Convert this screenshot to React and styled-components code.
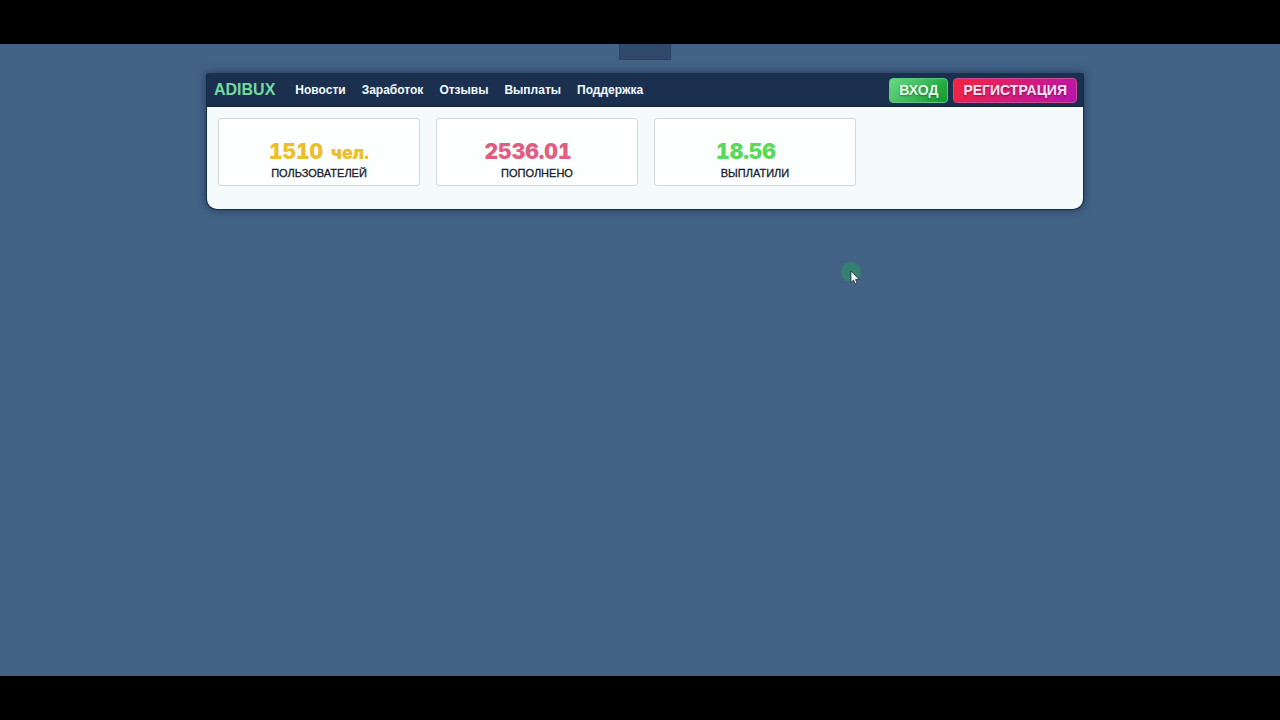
import React from "react";
import styled, { createGlobalStyle } from "styled-components";

const GlobalStyle = createGlobalStyle`
  *, *::before, *::after { box-sizing: border-box; }
  body {
    margin: 0;
    background: #000;
    font-family: "Liberation Sans", Arial, sans-serif;
  }
`;

const Screen = styled.div`
  position: relative;
  min-height: 100vh;
  padding: 44px 0;
  display: flex;
  background: #000;
`;

const Page = styled.div`
  flex: 1;
  display: flex;
  flex-direction: column;
  align-items: center;
  padding: 0 0 24px 10px;
  background: #426286;
`;

const Tab = styled.div`
  width: 52px;
  height: 16px;
  margin-bottom: 13px;
  background: #304869;
  border: 1px solid #2b4160;
  border-top: 0;
`;

const Panel = styled.div`
  width: 100%;
  max-width: 878px;
  border: 1px solid #142a45;
  border-top: 0;
  border-radius: 2px 2px 11px 11px;
  background: #f5fbfb;
  box-shadow: 0 0 8px rgba(16, 32, 56, 0.6);
`;

const Header = styled.header`
  display: flex;
  align-items: center;
  justify-content: space-between;
  height: 34px;
  padding: 1px 6px 0 7px;
  border-bottom: 1px solid #10233a;
  background: #1a304e;
`;

const Menu = styled.nav`
  display: flex;
  align-items: center;
  gap: 16px;
`;

const Logo = styled.a`
  margin-right: 4px;
  color: #74dba0;
  font-size: 16px;
  font-weight: 700;
  line-height: 20px;
  text-decoration: none;
`;

const MenuLink = styled.a`
  color: #f2fbff;
  font-size: 12px;
  font-weight: 700;
  line-height: 20px;
  text-decoration: none;
`;

const Actions = styled.div`
  display: flex;
  gap: 5px;
`;

const Button = styled.button`
  height: 25px;
  padding: 0 9px;
  border: 1px solid ${(p) => p.$edge};
  border-radius: 4px;
  background: ${(p) => p.$fill};
  color: ${(p) => p.$ink};
  font-family: inherit;
  font-size: 14px;
  font-weight: 700;
  line-height: 20px;
  text-shadow: 0 1px 2px rgba(0, 0, 0, 0.4);
  cursor: pointer;
`;

const Stats = styled.main`
  display: flex;
  flex-wrap: wrap;
  gap: 16px;
  padding: 11px 11px 23px;
`;

const Card = styled.section`
  display: flex;
  flex-direction: column;
  align-items: center;
  width: 202px;
  height: 68px;
  padding-top: 20px;
  border: 1px solid #d3dadb;
  border-radius: 3px;
  background: #fdfffe;
`;

const Value = styled.div`
  height: 26px;
  padding-right: ${(p) => (p.$hasUnit ? 0 : 18)}px;
  color: ${(p) => p.$color};
  font-family: Inter, "Arial Black", sans-serif;
  font-size: 21px;
  font-variant-numeric: tabular-nums;
  font-weight: 900;
  line-height: 26px;
`;

const Unit = styled.span`
  margin-left: 2px;
  font-size: 18px;
`;

const Label = styled.div`
  color: #17202a;
  font-size: 11px;
  line-height: 16px;
  -webkit-text-stroke: 0.3px #17202a;
`;

const Pointer = styled.div`
  position: absolute;
  left: 841px;
  top: 262px;
  width: 20px;
  height: 20px;
  border-radius: 50%;
  background: #358070;
  pointer-events: none;

  svg {
    position: absolute;
    left: 9px;
    top: 8px;
  }
`;

const links = ["Новости", "Заработок", "Отзывы", "Выплаты", "Поддержка"];

const stats = [
  { value: "1510", unit: "чел.", label: "ПОЛЬЗОВАТЕЛЕЙ", color: "#ecc02d" },
  { value: "2536.01", label: "ПОПОЛНЕНО", color: "#df5f83" },
  { value: "18.56", label: "ВЫПЛАТИЛИ", color: "#5ad95a" },
];

export default function App() {
  return (
    <>
      <GlobalStyle />
      <Screen>
        <Page>
          <Tab />
          <Panel>
            <Header>
              <Menu>
                <Logo href="#">ADIBUX</Logo>
                {links.map((text) => (
                  <MenuLink href="#" key={text}>{text}</MenuLink>
                ))}
              </Menu>
              <Actions>
                <Button
                  type="button"
                  $fill="linear-gradient(135deg, #6bd886, #0c9a2c)"
                  $edge="#5fc587"
                  $ink="#e4ffe9"
                >
                  ВХОД
                </Button>
                <Button
                  type="button"
                  $fill="linear-gradient(135deg, #f5243c, #b414b4)"
                  $edge="#cf4a94"
                  $ink="#ffe2f4"
                >
                  РЕГИСТРАЦИЯ
                </Button>
              </Actions>
            </Header>
            <Stats>
              {stats.map((s) => (
                <Card key={s.label}>
                  <Value $color={s.color} $hasUnit={Boolean(s.unit)}>
                    {s.value}
                    {s.unit && <> <Unit>{s.unit}</Unit></>}
                  </Value>
                  <Label>{s.label}</Label>
                </Card>
              ))}
            </Stats>
          </Panel>
        </Page>
        <Pointer aria-hidden="true">
          <svg width="10" height="15" viewBox="0 0 10 15">
            <path
              d="M1 1v11.4l2.6-2.3 1.5 3.8 2-.9-1.6-3.6h3.7z"
              fill="#fff"
              stroke="#1b2733"
              strokeWidth=".8"
            />
          </svg>
        </Pointer>
      </Screen>
    </>
  );
}
